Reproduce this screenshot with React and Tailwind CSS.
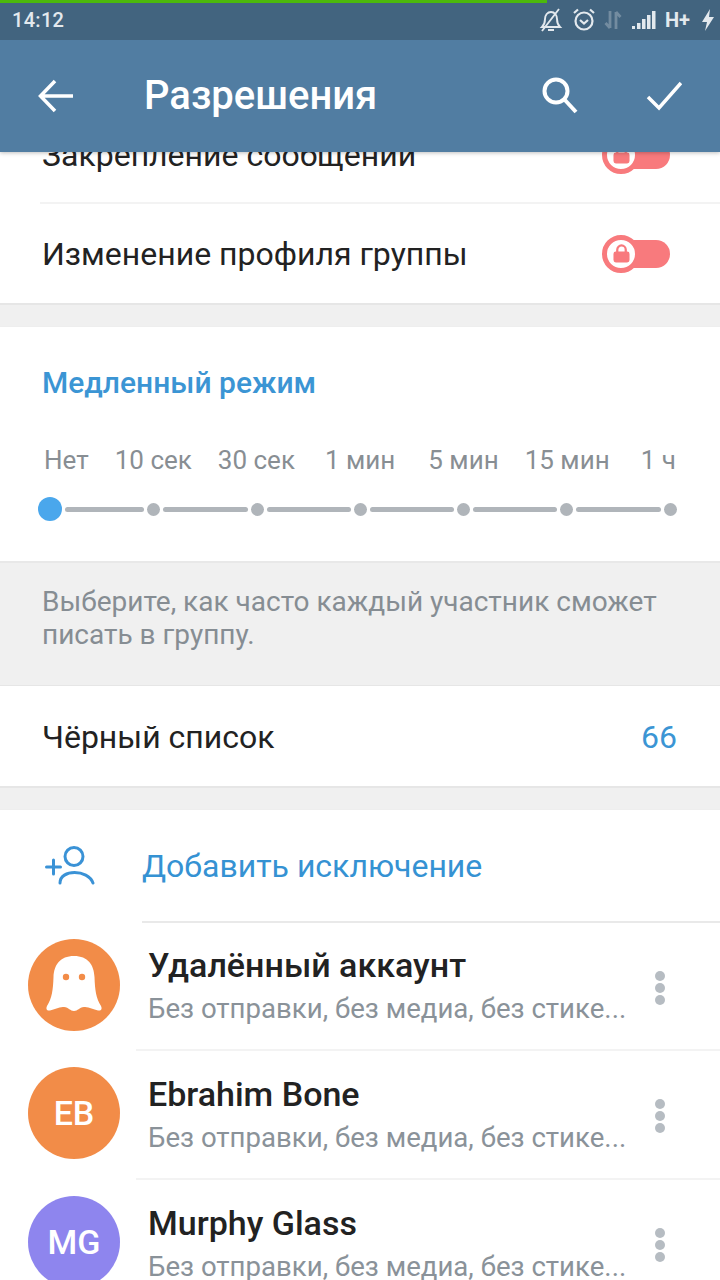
import React from "react";

const Lock = () => (
  <div className="relative w-[68px] h-[38px] shrink-0">
    <div className="absolute left-[19px] right-0 top-[5px] h-[28px] rounded-r-full bg-[#f87a7d]" />
    <div className="absolute left-0 top-0 w-[38px] h-[38px] rounded-full bg-white border-[5px] border-[#f87a7d] flex items-center justify-center">
      <svg width="17" height="19" viewBox="0 0 18 20">
        <path d="M4.5 9V6a4.5 4.5 0 0 1 9 0v3" fill="none" stroke="#f87a7d" strokeWidth="2.4" />
        <rect x="0.5" y="8" width="17" height="11.5" rx="2.5" fill="#f87a7d" />
      </svg>
    </div>
  </div>
);

const Dots = () => (
  <div className="flex flex-col gap-[2px] shrink-0 w-[10px]">
    <div className="w-[10px] h-[10px] rounded-full bg-[#b6bcc2]" />
    <div className="w-[10px] h-[10px] rounded-full bg-[#b6bcc2]" />
    <div className="w-[10px] h-[10px] rounded-full bg-[#b6bcc2]" />
  </div>
);

const Ghost = () => (
  <svg width="56" height="62" viewBox="0 0 56 62">
    <path
      d="M28 2C14 2 8 11 7.500 23C7 36 6 44 1 52C-0.500 55 1 57 4 56.500C9 55.500 13 52.500 18 53C23 53.500 24 57 28 57C32 57 33 53.500 38 53C43 52.500 47 55.500 52 56.500C55 57 56.500 55 55 52C50 44 49 36 48.500 23C48 11 42 2 28 2Z"
      fill="#fff"
    />
    <circle cx="20" cy="23" r="3.200" fill="#f28c48" />
    <circle cx="36" cy="23" r="3.200" fill="#f28c48" />
  </svg>
);

const Member = ({ name, color, initials, ghost, border, h, pt }) => (
  <div className={`flex shrink-0 pl-[28px] ${h}`}>
    <div className={`w-[92px] h-[92px] mt-[16px] rounded-full flex items-center justify-center shrink-0 text-white text-[34px] font-medium ${color}`}>
      {ghost ? <Ghost /> : initials}
    </div>
    <div className={`flex-1 ml-[16px] pl-[12px] flex pr-[55px] min-w-0 ${border ? "border-b-2 border-[#f3f3f3]" : ""}`}>
      <div className={`flex-1 min-w-0 ${pt}`}>
        <div className="text-[34px] leading-[44px] font-medium text-[#222222] whitespace-nowrap">{name}</div>
        <div className="text-[27.6px] leading-[38px] text-[#8a9299] whitespace-nowrap mt-[3px]">Без отправки, без медиа, без стике...</div>
      </div>
      <div className="pt-[48px] ml-[1px]">
        <Dots />
      </div>
    </div>
  </div>
);

const Dot = () => <div className="w-[13px] h-[13px] rounded-full bg-[#b0b5ba] shrink-0" />;
const Line = ({ w }) => <div className={`h-[5px] rounded-full bg-[#b0b5ba] mx-[3px] ${w}`} />;

export default function App() {
  return (
    <div className="w-[720px] h-[1280px] overflow-hidden bg-white flex flex-col text-[#222222] font-['Roboto',sans-serif]">
      <div className="relative z-10 shrink-0 shadow-[0_1px_4px_rgba(0,0,0,0.25)]">
        <div className="h-[40px] bg-[#42647f] flex items-center pl-[12px] pr-[5px] text-[#e3e9ee] relative">
          <div className="absolute left-0 top-0 h-[3px] w-[547px] bg-[#4cb90c]" />
          <span className="text-[20px] font-medium tracking-[0.3px]">14:12</span>
          <div className="ml-auto flex items-center">
            <svg width="24" height="26" viewBox="0 0 24 26" fill="none" stroke="#e3e9ee" strokeWidth="1.900">
              <path d="M3 20c2-2 3-4 3-8 0-4 2.500-7 6-7s6 3 6 7c0 4 1 6 3 8z" />
              <path d="M9 23h6M3 24 20 2" />
            </svg>
            <svg className="ml-[9px]" width="24" height="26" viewBox="0 0 24 26" fill="none" stroke="#e3e9ee" strokeWidth="2.200">
              <circle cx="12" cy="14" r="8.500" />
              <path d="M8 13l4 3.500 4-3.500M2 6l4-3.500M22 6l-4-3.500" />
            </svg>
            <svg className="ml-[8px]" width="18" height="22" viewBox="0 0 18 22" fill="none" stroke="#738ca0" strokeWidth="2.800">
              <path d="M6 2v17M1.500 14 6 19M12 20V3M16.500 8 12 3" />
            </svg>
            <svg className="ml-[10px]" width="26" height="20" viewBox="0 0 26 20" fill="#e3e9ee">
              <rect x="0" y="16" width="3" height="3" />
              <rect x="5" y="13" width="3.500" height="6" />
              <rect x="10" y="9" width="3.500" height="10" />
              <rect x="15" y="5" width="3.500" height="14" />
              <rect x="20" y="1" width="3.500" height="18" />
            </svg>
            <span className="ml-[7px] text-[20px] font-bold text-[#e3e9ee] leading-none">H+</span>
            <svg className="ml-[11px]" width="14" height="24" viewBox="0 0 14 24" fill="#e3e9ee">
              <path d="M9 1 1 14h5l-2 9 9-14H8z" />
            </svg>
          </div>
        </div>
        <div className="h-[112px] bg-[#517da2] flex items-center text-white">
          <svg className="ml-[38px]" width="36" height="34" viewBox="0 0 36 34" fill="none" stroke="#fff" strokeWidth="3.500">
            <path d="M35 17H3M17 2 2.500 17 17 32" />
          </svg>
          <span className="ml-[70px] text-[40px] font-medium">Разрешения</span>
          <svg className="ml-auto" width="38" height="38" viewBox="0 0 38 38" fill="none" stroke="#fff" strokeWidth="4">
            <circle cx="14" cy="14" r="11.500" />
            <path d="M22 22l12 13" />
          </svg>
          <svg className="ml-[66px] mr-[38px]" width="36" height="30" viewBox="0 0 36 30" fill="none" stroke="#fff" strokeWidth="3.500">
            <path d="M2 16l11 11L35 2" />
          </svg>
        </div>
      </div>

      <div className="flex-1 min-h-0 overflow-hidden flex flex-col">
        <div className="h-[52px] shrink-0 overflow-hidden">
          <div className="h-[100px] -mt-[48px] ml-[40px] pl-[2px] pr-[50px] pt-[3px] flex items-center justify-between border-b-2 border-[#f3f3f3]">
            <span className="text-[32px]">Закрепление сообщений</span>
            <Lock />
          </div>
        </div>
        <div className="h-[99px] shrink-0 pl-[42px] pr-[50px] flex items-center justify-between">
          <span className="text-[32px]">Изменение профиля группы</span>
          <Lock />
        </div>

        <div className="h-[24px] shrink-0 bg-[#f0f0f0] border-t-2 border-b border-t-[#e6e6e6] border-b-[#eeeeee]" />

        <div className="h-[234px] shrink-0 bg-white flex flex-col">
          <div className="pl-[42px] pt-[36px] text-[30px] leading-[40px] font-medium text-[#3b95d4]">Медленный режим</div>
          <div className="flex mt-[39px] text-[26px] leading-[36px] text-[#888e93] whitespace-nowrap">
            <span className="ml-[44px]">Нет</span>
            <span className="ml-[26px]">10 сек</span>
            <span className="ml-[26px]">30 сек</span>
            <span className="ml-[30px]">1 мин</span>
            <span className="ml-[33px]">5 мин</span>
            <span className="ml-[26px]">15 мин</span>
            <span className="ml-[31px]">1 ч</span>
          </div>
          <div className="flex items-center ml-[38px] mt-[19px]">
            <div className="w-[24px] h-[24px] rounded-full bg-[#4aa7ec] shrink-0" />
            <Line w="w-[79px]" />
            <Dot />
            <Line w="w-[85px]" />
            <Dot />
            <Line w="w-[84px]" />
            <Dot />
            <Line w="w-[84px]" />
            <Dot />
            <Line w="w-[84px]" />
            <Dot />
            <Line w="w-[85px]" />
            <Dot />
          </div>
        </div>

        <div className="h-[125px] shrink-0 bg-[#f0f0f0] border-t-2 border-b border-t-[#e8e8e8] border-b-[#e6e6e6] pl-[42px] pt-[22px] text-[28px] leading-[33px] text-[#868d93]">
          Выберите, как часто каждый участник сможет<br />писать в группу.
        </div>

        <div className="h-[100px] shrink-0 pl-[42px] pr-[43px] pt-[2px] flex items-center justify-between">
          <span className="text-[32px]">Чёрный список</span>
          <span className="text-[32px] text-[#3b95d4]">66</span>
        </div>

        <div className="h-[24px] shrink-0 bg-[#f0f0f0] border-t-2 border-b border-t-[#e6e6e6] border-b-[#eeeeee]" />

        <div className="h-[111px] shrink-0 flex items-center pl-[45px]">
          <svg width="50" height="40" viewBox="0 0 50 40" fill="none" stroke="#3a92d6" strokeWidth="3" strokeLinecap="round">
            <circle cx="29" cy="10.500" r="9" />
            <path d="M15 37c0-14 28-14 33 0M1.500 21h14M8.500 14v14" />
          </svg>
          <span className="ml-[47px] text-[32px] text-[#3592d3]">Добавить исключение</span>
        </div>
        <div className="h-[2px] shrink-0 ml-[142px] bg-[#e9e9e9]" />

        <Member h="h-[128px]" pt="pt-[20px]" name="Удалённый аккаунт" color="bg-[#f28c48]" ghost border />
        <Member h="h-[129px]" pt="pt-[21px]" name="Ebrahim Bone" color="bg-[#f28c48]" initials="EB" border />
        <Member h="h-[129px]" pt="pt-[21px]" name="Murphy Glass" color="bg-[#8e85ee]" initials="MG" />
      </div>
    </div>
  );
}
